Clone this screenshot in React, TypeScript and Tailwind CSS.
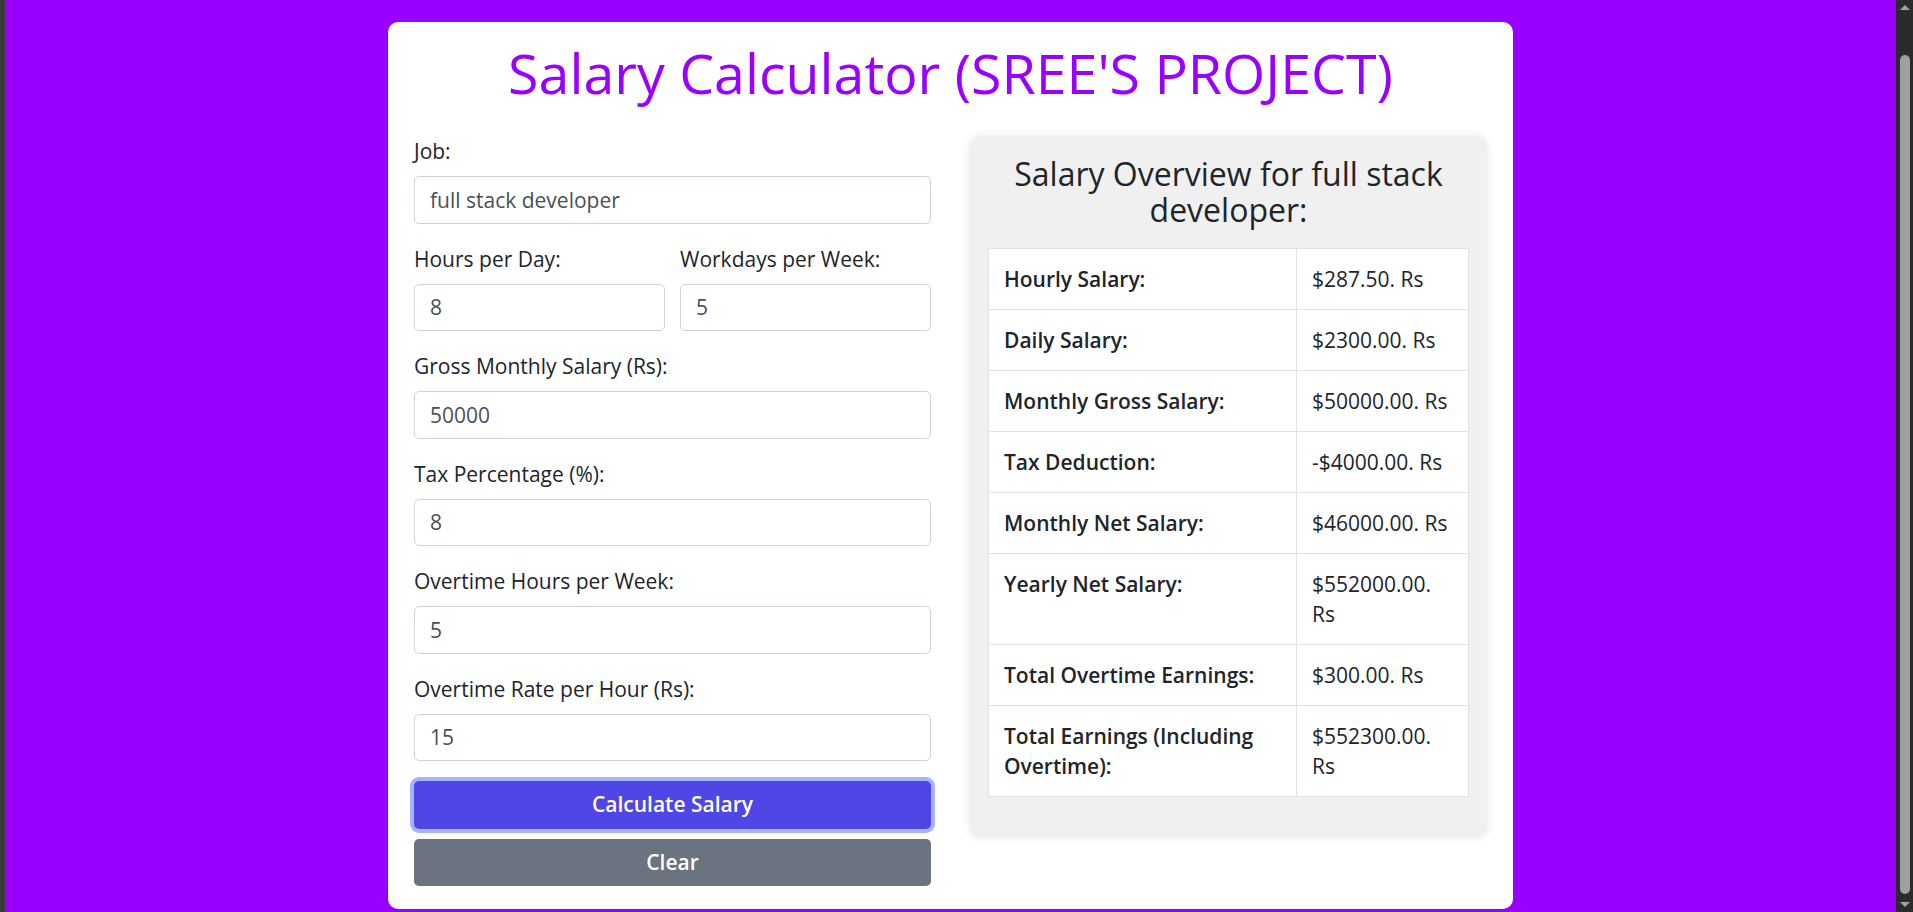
import React from "react";

const FONT = { fontFamily: '"Open Sans", "Noto Sans", Arial, sans-serif' };

function Field({ label, value }: { label: string; value: string }) {
  return (
    <div className="flex flex-col">
      <label className="mb-[10px] text-[21px] leading-[30px] text-[#212529]">{label}</label>
      <input
        defaultValue={value}
        className="block h-[47.5px] w-full rounded-[5px] border border-[#ced4da] bg-white px-[15px] text-[21px] text-[#495057] outline-none"
      />
    </div>
  );
}

const rows: [string, string][] = [
  ["Hourly Salary:", "$287.50. Rs"],
  ["Daily Salary:", "$2300.00. Rs"],
  ["Monthly Gross Salary:", "$50000.00. Rs"],
  ["Tax Deduction:", "-$4000.00. Rs"],
  ["Monthly Net Salary:", "$46000.00. Rs"],
  ["Yearly Net Salary:", "$552000.00. Rs"],
  ["Total Overtime Earnings:", "$300.00. Rs"],
  ["Total Earnings (Including Overtime):", "$552300.00. Rs"],
];

export default function App() {
  return (
    <div className="flex h-[912px] w-full overflow-hidden bg-[#9900ff]" style={FONT}>
      <div className="w-[5px] shrink-0 bg-[#3b3b3b]" />
      <main className="flex flex-1 justify-center">
        <div className="mt-[22px] w-[1125px] self-start rounded-[10px] bg-white px-[26px] pb-[23px] pt-[18px]">
          <h1 className="mb-[30px] text-center text-[55.5px] font-medium leading-[66px] text-[#9900ff]">
            Salary Calculator (SREE'S PROJECT)
          </h1>
          <div className="grid grid-cols-2 items-start gap-x-[39px]">
            <div className="flex flex-col gap-[20px]">
              <Field label="Job:" value="full stack developer" />
              <div className="grid grid-cols-2 gap-x-[15px]">
                <Field label="Hours per Day:" value="8" />
                <Field label="Workdays per Week:" value="5" />
              </div>
              <Field label="Gross Monthly Salary (Rs):" value="50000" />
              <Field label="Tax Percentage (%):" value="8" />
              <Field label="Overtime Hours per Week:" value="5" />
              <Field label="Overtime Rate per Hour (Rs):" value="15" />
              <div className="flex flex-col gap-[10px]">
                <button className="h-[47.5px] w-full rounded-[5px] bg-[#4f46e5] text-[21px] font-semibold text-white ring-[4px] ring-[#a5b4fc]">
                  Calculate Salary
                </button>
                <button className="h-[47.5px] w-full rounded-[5px] bg-[#6b7280] text-[21px] font-semibold text-white">
                  Clear
                </button>
              </div>
            </div>
            <div className="rounded-[10px] bg-[#f0f0f0] px-[18px] pb-[40px] pt-[20px] shadow-[0_0_10px_rgba(0,0,0,0.1)]">
              <h2 className="mb-[20px] text-center text-[32px] leading-[36px] text-[#212529]">
                Salary Overview for full stack developer:
              </h2>
              <table className="w-full table-fixed border-collapse bg-white text-[21px] leading-[30px] text-[#212529]">
                <colgroup>
                  <col className="w-[308px]" />
                  <col />
                </colgroup>
                <tbody>
                  {rows.map(([k, v]) => (
                    <tr key={k}>
                      <td className="border border-[#dee2e6] p-[15px] align-top font-semibold">{k}</td>
                      <td className="border border-[#dee2e6] p-[15px] align-top">{v}</td>
                    </tr>
                  ))}
                </tbody>
              </table>
            </div>
          </div>
        </div>
      </main>
      <div className="flex w-[17px] shrink-0 flex-col items-center bg-[#2b2b2b]">
        <div className="mt-[5px] h-0 w-0 border-x-[5px] border-b-[5px] border-x-transparent border-b-[#a3a3a3]" />
        <div className="mb-[8px] ml-[1px] mt-[45px] w-[10px] flex-1 rounded-full bg-[#9f9f9f]" />
        <div className="mb-[5px] h-0 w-0 border-x-[5px] border-t-[5px] border-x-transparent border-t-[#a3a3a3]" />
      </div>
    </div>
  );
}
